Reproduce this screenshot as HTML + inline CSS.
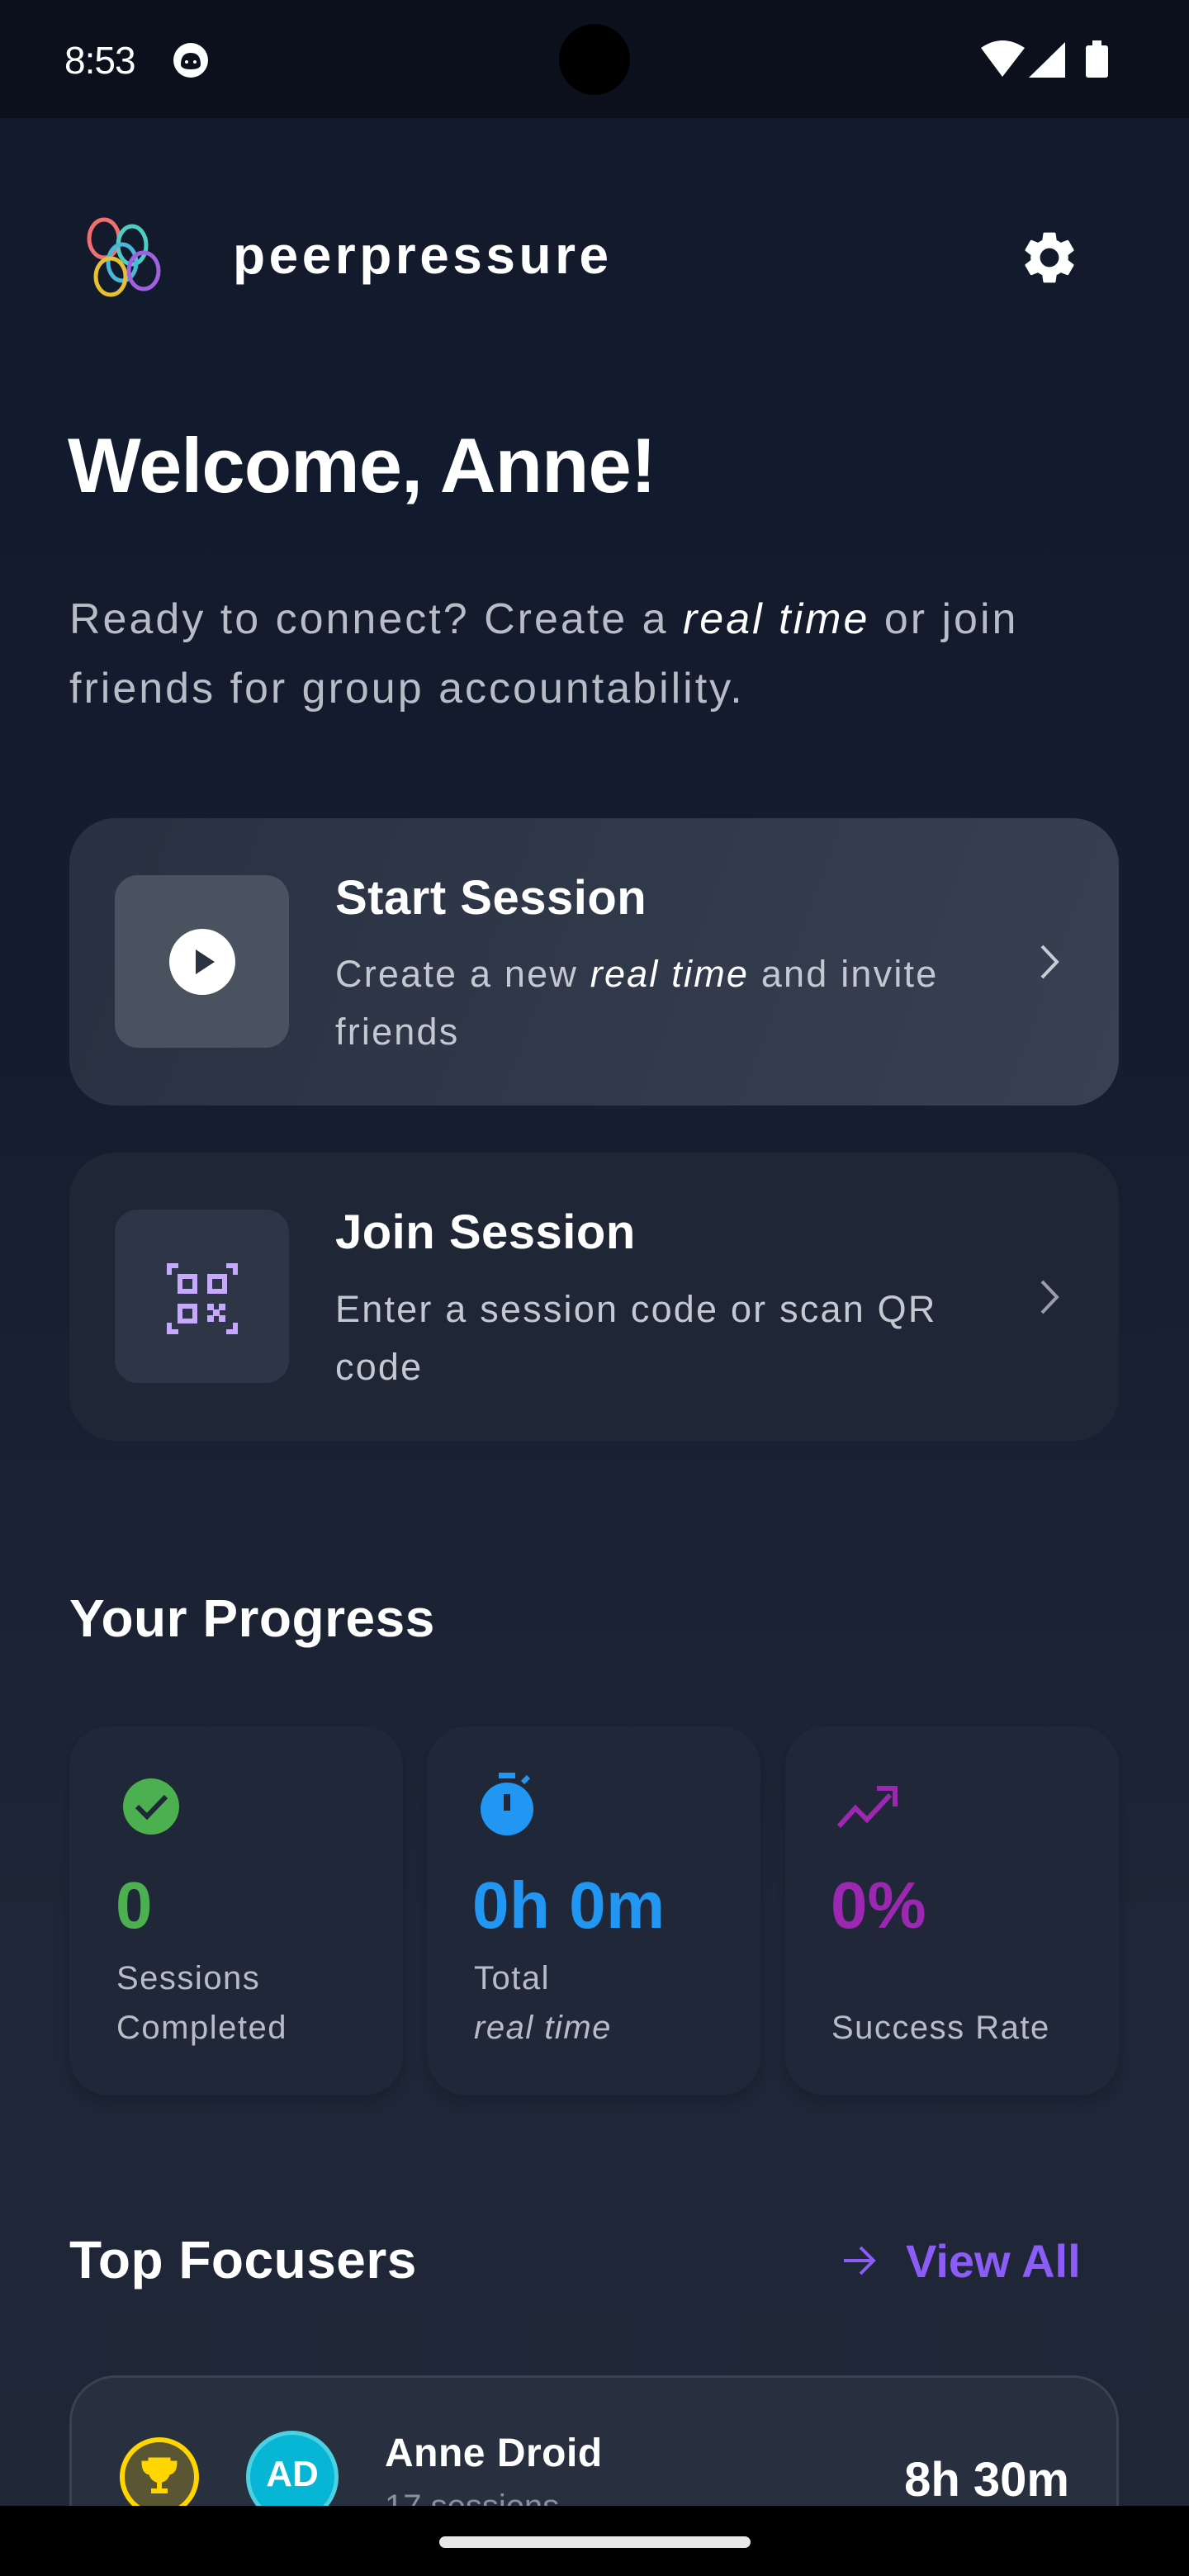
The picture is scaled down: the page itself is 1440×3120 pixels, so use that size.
<!DOCTYPE html>
<html style="overflow:hidden;height:3120px"><head><meta charset="utf-8"><style>
*{margin:0;padding:0;box-sizing:border-box}
body{width:1440px;height:3120px;overflow:hidden;font-family:"Liberation Sans",sans-serif;background:linear-gradient(180deg,#111a2c 0%,#141c2e 40%,#1e2637 75%,#1f2737 100%);position:relative;color:#fff}
.a{position:absolute;white-space:nowrap}
.card{position:absolute;border-radius:56px}
.ib{position:absolute;border-radius:28px}
.stat{position:absolute;top:2091px;width:404px;height:447px;border-radius:48px;background:#1f2738;box-shadow:0 6px 14px rgba(0,0,0,.18)}
.lbl{font-size:40px;color:#b8bcc6;letter-spacing:1.5px;line-height:60px}
</style></head><body>
<div class="a" style="left:0;top:0;width:1440px;height:143px;background:#0b101c"></div>
<div class="a" style="left:78px;top:46px;font-size:46px;color:#fff;letter-spacing:-1px">8:53</div>
<svg class="a" style="left:208px;top:50px" width="46" height="46" viewBox="0 0 46 46"><circle cx="23" cy="23" r="21" fill="#fff"/><path d="M11 28 Q11 14 23 14 Q35 14 35 28 Q35 34 23 34 Q11 34 11 28Z" fill="#0b101c"/><circle cx="18" cy="25" r="2" fill="#fff"/><circle cx="28" cy="25" r="2" fill="#fff"/></svg>
<div class="a" style="left:677px;top:29px;width:86px;height:86px;border-radius:50%;background:#000"></div>
<svg class="a" style="left:1185px;top:48px" width="160" height="48" viewBox="0 0 160 48"><path d="M3 10 Q29 -8 56 10 L29 45Z" fill="#fff"/><path d="M61 46 L105 3 L105 46Z" fill="#fff"/><rect x="130" y="7" width="27" height="39" rx="3" fill="#fff"/><rect x="138" y="1" width="11" height="7" fill="#fff"/></svg>
<svg class="a" style="left:102px;top:262px" width="96" height="98" viewBox="0 0 96 98"><g fill="none" stroke-width="5"><ellipse cx="24" cy="27" rx="18" ry="23" stroke="#f07070"/><ellipse cx="58" cy="35" rx="17" ry="23" stroke="#4ecdc4"/><ellipse cx="46" cy="56" rx="17" ry="22" stroke="#48b8d8"/><ellipse cx="32" cy="73" rx="18" ry="22" stroke="#e6c030"/><ellipse cx="72" cy="66" rx="18" ry="22" stroke="#a060e0"/></g></svg>
<div class="a" style="left:282px;top:272px;font-size:64px;font-weight:bold;letter-spacing:4.5px">peerpressure</div>
<svg class="a" style="left:1233px;top:274px" width="76" height="76" viewBox="0 0 24 24"><path fill="#fff" d="M19.14 12.94c.04-.3.06-.61.06-.94 0-.32-.02-.64-.07-.94l2.03-1.58a.49.49 0 0 0 .12-.61l-1.920-3.32a.488.488 0 0 0-.59-.22l-2.39.96c-.5-.38-1.03-.7-1.62-.94l-.36-2.54a.484.484 0 0 0-.48-.41h-3.84c-.24 0-.43.17-.47.41l-.36 2.54c-.59.24-1.130.57-1.62.94l-2.39-.96c-.22-.08-.47 0-.59.22L2.74 8.87c-.12.21-.08.47.12.61l2.03 1.58c-.05.3-.09.63-.09.94s.02.64.07.94l-2.03 1.58a.49.49 0 0 0-.12.61l1.92 3.32c.12.22.37.29.59.22l2.39-.96c.5.38 1.03.7 1.62.94l.36 2.54c.05.24.24.41.48.41h3.84c.24 0 .44-.17.47-.41l.36-2.54c.59-.24 1.13-.56 1.62-.94l2.39.96c.22.08.47 0 .59-.22l1.92-3.32c.12-.22.07-.47-.12-.61l-2.01-1.58zM12 15.6c-1.98 0-3.6-1.62-3.6-3.6s1.62-3.6 3.6-3.6 3.6 1.62 3.6 3.6-1.62 3.6-3.6 3.6z"/></svg>
<div class="a" style="left:82px;top:510px;font-size:94px;font-weight:bold;letter-spacing:-1px">Welcome, Anne!</div>
<div class="a" style="left:84px;top:708px;font-size:52px;line-height:84px;color:#b8bcc6;letter-spacing:3px">Ready to connect? Create a <i style="color:#fff">real time</i> or join<br>friends for group accountability.</div>

<div class="card" style="left:84px;top:991px;width:1271px;height:348px;background:linear-gradient(110deg,#283041,#384152)"></div>
<div class="ib" style="left:139px;top:1060px;width:211px;height:209px;background:#4a5260"></div>
<svg class="a" style="left:204px;top:1124px" width="82" height="82" viewBox="0 0 82 82"><circle cx="41" cy="41" r="40" fill="#fff"/><path d="M33 26 L56 41 L33 56Z" fill="#2b3242"/></svg>
<div class="a" style="left:406px;top:1054px;font-size:58px;font-weight:bold;letter-spacing:.5px">Start Session</div>
<div class="a" style="left:406px;top:1145px;font-size:45px;line-height:70px;color:#c4c8d0;letter-spacing:2.2px">Create a new <i style="color:#fff">real time</i> and invite<br>friends</div>
<svg class="a" style="left:1256px;top:1142px" width="30" height="46" viewBox="0 0 30 46"><path d="M6 4 L24 23 L6 42" fill="none" stroke="#c8ccd4" stroke-width="4"/></svg>

<div class="card" style="left:84px;top:1396px;width:1271px;height:349px;background:#1f2737"></div>
<div class="ib" style="left:139px;top:1465px;width:211px;height:210px;background:#2e3547"></div>
<svg class="a" style="left:202px;top:1530px" width="86" height="86" viewBox="0 0 86 86"><g fill="none" stroke="#c7a8ff" stroke-width="6"><path d="M3 14 V3 H14 M72 3 H83 V14 M3 72 V83 H14 M72 83 H83 V72"/><rect x="16" y="16" width="18" height="18"/><rect x="52" y="16" width="18" height="18"/><rect x="16" y="52" width="18" height="18"/></g><g fill="#c7a8ff"><rect x="49" y="49" width="8" height="8"/><rect x="63" y="49" width="8" height="8"/><rect x="56" y="56" width="8" height="8"/><rect x="49" y="63" width="8" height="8"/><rect x="63" y="63" width="8" height="8"/></g></svg>
<div class="a" style="left:406px;top:1459px;font-size:58px;font-weight:bold;letter-spacing:.5px">Join Session</div>
<div class="a" style="left:406px;top:1551px;font-size:45px;line-height:70px;color:#c4c8d0;letter-spacing:2.2px">Enter a session code or scan QR<br>code</div>
<svg class="a" style="left:1256px;top:1548px" width="30" height="46" viewBox="0 0 30 46"><path d="M6 4 L24 23 L6 42" fill="none" stroke="#9a9ea8" stroke-width="4"/></svg>

<div class="a" style="left:84px;top:1923px;font-size:64px;font-weight:bold;letter-spacing:.5px">Your Progress</div>

<div class="stat" style="left:84px"></div>
<div class="stat" style="left:517px"></div>
<div class="stat" style="left:951px"></div>
<svg class="a" style="left:147px;top:2152px" width="72" height="72" viewBox="0 0 72 72"><circle cx="36" cy="36" r="34" fill="#4caf50"/><path d="M19 36 L31 48 L54 24" fill="none" stroke="#1f2738" stroke-width="6"/></svg>
<div class="a" style="left:140px;top:2262px;font-size:80px;font-weight:bold;color:#4caf50">0</div>
<div class="a lbl" style="left:141px;top:2366px">Sessions<br>Completed</div>
<svg class="a" style="left:578px;top:2145px" width="72" height="80" viewBox="0 0 72 80"><rect x="26" y="2" width="20" height="7" fill="#2196f3"/><path d="M55 14 L62 7" stroke="#2196f3" stroke-width="6"/><circle cx="36" cy="46" r="32" fill="#2196f3"/><rect x="32" y="28" width="8" height="20" fill="#1f2738"/></svg>
<div class="a" style="left:572px;top:2262px;font-size:80px;font-weight:bold;color:#2196f3;letter-spacing:.5px">0h 0m</div>
<div class="a lbl" style="left:574px;top:2366px">Total<br><i>real time</i></div>
<svg class="a" style="left:1012px;top:2160px" width="76" height="56" viewBox="0 0 76 56"><path d="M4 52 L24 30 L38 44 L66 14" fill="none" stroke="#9c27b0" stroke-width="6"/><path d="M50 6 H72 V28" fill="none" stroke="#9c27b0" stroke-width="6"/></svg>
<div class="a" style="left:1006px;top:2262px;font-size:80px;font-weight:bold;color:#9c27b0">0%</div>
<div class="a lbl" style="left:1007px;top:2426px">Success Rate</div>

<div class="a" style="left:84px;top:2700px;font-size:64px;font-weight:bold;letter-spacing:.5px">Top Focusers</div>
<svg class="a" style="left:1018px;top:2718px" width="46" height="40" viewBox="0 0 46 40"><path d="M4 20 H40 M24 4 L40 20 L24 36" fill="none" stroke="#8b5cf6" stroke-width="4"/></svg>
<div class="a" style="left:1097px;top:2706px;font-size:56px;font-weight:bold;color:#8b5cf6">View All</div>

<div class="card" style="left:84px;top:2877px;width:1271px;height:243px;background:#283040;border:3px solid #3a4252;border-bottom:none;border-radius:56px 56px 0 0"></div>
<div class="a" style="left:145px;top:2952px;width:96px;height:96px;border-radius:50%;background:#5a5532;border:6px solid #ffd600"></div>
<svg class="a" style="left:169px;top:2974px" width="48" height="50" viewBox="0 0 48 50"><path d="M12 4 H36 V16 Q36 30 24 32 Q12 30 12 16Z M12 8 H4 Q4 22 14 22 M36 8 H44 Q44 22 34 22" fill="#ffd600" stroke="#ffd600" stroke-width="3"/><rect x="21" y="30" width="6" height="10" fill="#ffd600"/><rect x="14" y="40" width="20" height="6" fill="#ffd600"/></svg>
<div class="a" style="left:298px;top:2944px;width:112px;height:112px;border-radius:50%;background:#06b6d4;border:5px solid #4dd0e1"></div>
<div class="a" style="left:298px;top:2972px;width:112px;text-align:center;font-size:44px;font-weight:bold">AD</div>
<div class="a" style="left:466px;top:2944px;font-size:48px;font-weight:bold;letter-spacing:.5px">Anne Droid</div>
<div class="a" style="left:466px;top:3014px;font-size:40px;color:#8a909c">17 sessions</div>
<div class="a" style="right:145px;top:2970px;font-size:58px;font-weight:bold">8h 30m</div>

<div class="a" style="left:0;top:3035px;width:1440px;height:85px;background:#000"></div>
<div class="a" style="left:532px;top:3072px;width:377px;height:14px;border-radius:7px;background:#e8e8e8"></div>
</body></html>
